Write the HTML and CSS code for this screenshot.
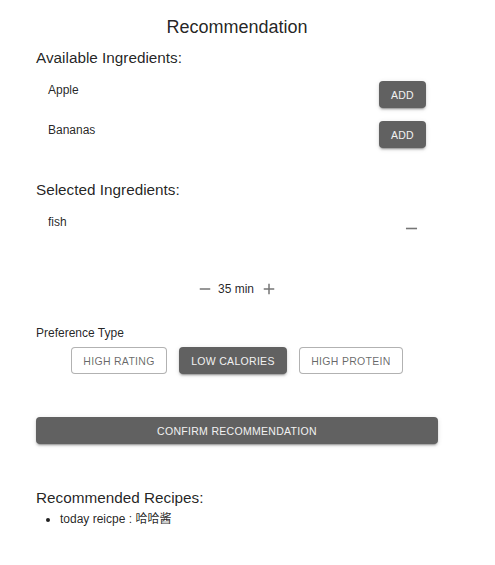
FILE: index.html
```html
<!DOCTYPE html>
<html lang="en">
<head>
<meta charset="utf-8">
<title>Recommendation</title>
<link rel="stylesheet" href="styles.css">
</head>
<body>
<div class="page">
  <h1 class="title">Recommendation</h1>

  <h2 class="section-title">Available Ingredients:</h2>
  <div class="ing-list">
    <div class="ing-row">
      <span class="ing-name">Apple</span>
      <button class="btn btn-contained">ADD</button>
    </div>
    <div class="ing-row">
      <span class="ing-name">Bananas</span>
      <button class="btn btn-contained">ADD</button>
    </div>
  </div>

  <h2 class="section-title section-gap">Selected Ingredients:</h2>
  <div class="ing-list">
    <div class="ing-row sel-row">
      <span class="ing-name">fish</span>
      <button class="icon-btn remove-btn" aria-label="remove">
        <svg class="icon icon-remove" viewBox="0 0 24 24"><path d="M19 13H5v-2h14v2z"/></svg>
      </button>
    </div>
  </div>

  <div class="timer">
    <svg class="icon icon-timer" viewBox="0 0 24 24"><path d="M19 13H5v-2h14v2z"/></svg>
    <span class="timer-value">35 min</span>
    <svg class="icon icon-timer" viewBox="0 0 24 24"><path d="M19 13h-6v6h-2v-6H5v-2h6V5h2v6h6v2z"/></svg>
  </div>

  <div class="pref-label">Preference Type</div>
  <div class="pref-row">
    <button class="btn btn-outlined">HIGH RATING</button>
    <button class="btn btn-contained">LOW CALORIES</button>
    <button class="btn btn-outlined">HIGH PROTEIN</button>
  </div>

  <button class="btn btn-contained btn-full">CONFIRM RECOMMENDATION</button>

  <h2 class="section-title recipes-title">Recommended Recipes:</h2>
  <ul class="recipes">
    <li>today reicpe : 哈哈酱</li>
  </ul>
</div>
</body>
</html>
```

FILE: styles.css
```css
* { box-sizing: border-box; }

body {
  margin: 0;
  background: #fff;
  color: rgba(0, 0, 0, 0.87);
  font-family: "Liberation Sans", Arial, "Noto Sans CJK SC", sans-serif;
}

.page {
  width: 438px;
  padding: 16px 0 0 36px;
}

.title {
  margin: 0;
  font-size: 18px;
  line-height: 22px;
  font-weight: 400;
  text-align: center;
}

.section-title {
  margin: 10px 0 0;
  font-size: 15.3px;
  line-height: 20px;
  font-weight: 400;
}

.section-gap { margin-top: 32px; }

.ing-list {
  margin-top: 13px;
  display: flex;
  flex-direction: column;
  gap: 13px;
}

.ing-row {
  display: flex;
  justify-content: space-between;
  align-items: flex-start;
  height: 27px;
  padding: 0 12px;
}

.sel-row { height: 30px; }

.ing-name {
  font-size: 12px;
  line-height: 18px;
}

.btn {
  font-family: "Liberation Sans", Arial, sans-serif;
  font-size: 10.5px;
  letter-spacing: 0.3px;
  line-height: 19px;
  height: 27px;
  border-radius: 4px;
  padding: 5px 12px 3px;
  cursor: pointer;
  white-space: nowrap;
}

.btn-contained {
  background: #616161;
  color: #f2f2f2;
  border: none;
  box-shadow: 0 3px 1px -2px rgba(0,0,0,0.2), 0 2px 2px 0 rgba(0,0,0,0.14), 0 1px 5px 0 rgba(0,0,0,0.12);
}

.btn-outlined {
  background: #fff;
  color: rgba(0, 0, 0, 0.6);
  border: 1px solid rgba(0, 0, 0, 0.3);
  padding: 4px 11px 2px;
}

.icon-btn {
  background: none;
  border: none;
  padding: 5px;
  margin-top: 1px;
  display: flex;
}

.remove-btn { margin-right: -12px; padding-right: 17px; }

.icon {
  fill: #757575;
  display: block;
}

.icon-remove { width: 19px; height: 19px; }

.timer {
  margin-top: 37px;
  display: flex;
  justify-content: center;
  align-items: center;
  gap: 4px;
  height: 18px;
}

.icon-timer { width: 18px; height: 18px; }

.timer-value {
  font-size: 12px;
  line-height: 18px;
  padding: 0 1px 0 0;
}

.timer-value + .icon-timer { margin-left: 1px; }

.pref-label {
  margin-top: 26px;
  font-size: 12px;
  line-height: 18px;
}

.pref-row {
  margin-top: 5px;
  display: flex;
  justify-content: center;
  gap: 12.5px;
}

.btn-full {
  display: block;
  width: 100%;
  margin-top: 43px;
}

.recipes-title { margin-top: 44px; }

.recipes {
  margin: 2px 0 0;
  padding-left: 24px;
  font-size: 12px;
  line-height: 18px;
}
```
